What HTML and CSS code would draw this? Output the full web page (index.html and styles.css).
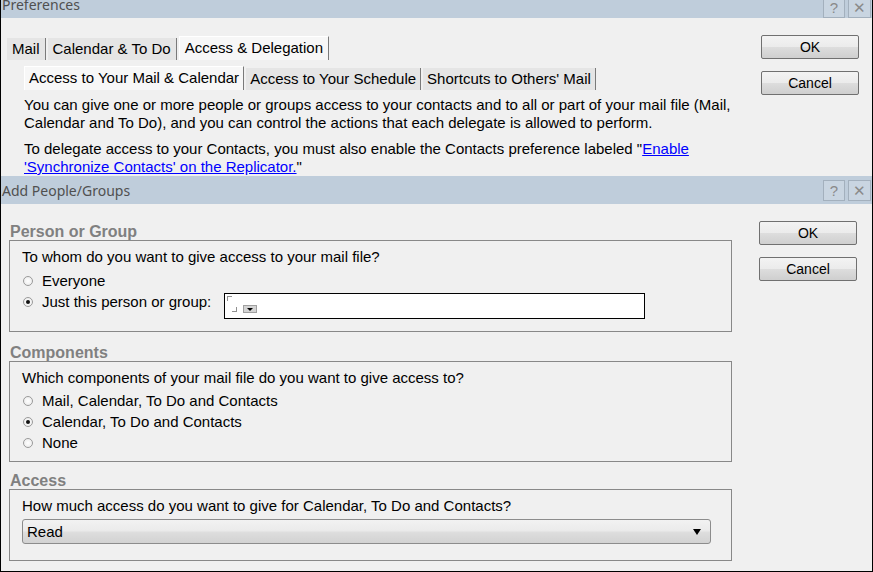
FILE: index.html
```html
<!DOCTYPE html>
<html lang="en">
<head>
    <meta charset="UTF-8">
    <title>Preferences - Add People/Groups</title>
    <link rel="stylesheet" href="styles.css">
</head>
<body>

    <!-- Preferences window (background) -->
    <div class="window prefs">
        <div class="titlebar top">
            <span class="title cut">Preferences</span>
            <div class="title-btns">
                <span class="tbtn">?</span>
                <span class="tbtn">&#x2715;</span>
            </div>
        </div>
        <div class="win-body">
            <div class="prefs-main">
                <div class="tabs">
                    <span class="tab">Mail</span>
                    <span class="tab">Calendar &amp; To Do</span>
                    <span class="tab active">Access &amp; Delegation</span>
                </div>
                <div class="tabs sub">
                    <span class="tab active">Access to Your Mail &amp; Calendar</span>
                    <span class="tab">Access to Your Schedule</span>
                    <span class="tab">Shortcuts to Others' Mail</span>
                </div>
                <p class="info">You can give one or more people or groups access to your contacts and to all or part of your mail file (Mail,<br>Calendar and To Do), and you can control the actions that each delegate is allowed to perform.</p>
                <p class="info">To delegate access to your Contacts, you must also enable the Contacts preference labeled "<a href="#">Enable <br>'Synchronize Contacts' on the Replicator.</a>"</p>
            </div>
            <div class="btn-col first">
                <button class="btn">OK</button>
                <button class="btn">Cancel</button>
            </div>
        </div>
    </div>

    <!-- Add People/Groups dialog -->
    <div class="window dialog">
        <div class="titlebar">
            <span class="title">Add People/Groups</span>
            <div class="title-btns">
                <span class="tbtn">?</span>
                <span class="tbtn">&#x2715;</span>
            </div>
        </div>
        <div class="win-body">
            <div class="dlg-main">
                <div class="group-label">Person or Group</div>
                <div class="group">
                    <div class="question">To whom do you want to give access to your mail file?</div>
                    <div class="radio-row">
                        <span class="radio"></span>
                        <span>Everyone</span>
                    </div>
                    <div class="radio-row person">
                        <span class="radio checked"></span>
                        <span class="person-label">Just this person or group:</span>
                        <div class="name-field">
                            <span class="corner tl"></span>
                            <span class="corner br"></span>
                            <span class="mini-drop"></span>
                        </div>
                    </div>
                </div>

                <div class="group-label">Components</div>
                <div class="group comp">
                    <div class="question">Which components of your mail file do you want to give access to?</div>
                    <div class="radio-row">
                        <span class="radio"></span>
                        <span>Mail, Calendar, To Do and Contacts</span>
                    </div>
                    <div class="radio-row">
                        <span class="radio checked"></span>
                        <span>Calendar, To Do and Contacts</span>
                    </div>
                    <div class="radio-row">
                        <span class="radio"></span>
                        <span>None</span>
                    </div>
                </div>

                <div class="group-label last">Access</div>
                <div class="group access">
                    <div class="question">How much access do you want to give for Calendar, To Do and Contacts?</div>
                    <div class="select">
                        <span>Read</span>
                        <span class="arrow"></span>
                    </div>
                </div>
            </div>
            <div class="btn-col">
                <button class="btn">OK</button>
                <button class="btn">Cancel</button>
            </div>
        </div>
    </div>

</body>
</html>
```

FILE: styles.css
```css
body {
    margin: 0;
    width: 873px;
    height: 572px;
    overflow: hidden;
    background-color: #f0f0f0;
    font-family: 'Liberation Sans', Arial, sans-serif;
    font-size: 15px;
    color: #000;
}

.window {
    box-sizing: border-box;
    border-left: 1px solid #000;
    border-right: 1px solid #000;
    background-color: #f0f0f0;
}

.prefs {
    height: 176px;
}

.dialog {
    height: 396px;
    border-bottom: 1px solid #000;
}

/* title bars */
.titlebar {
    height: 28px;
    background-color: #bfcddb;
    display: flex;
    align-items: center;
    justify-content: space-between;
    padding: 0 1px 0 1px;
}

.titlebar.top {
    height: 18px;
    align-items: flex-start;
    overflow: hidden;
}

.title {
    font-family: 'Noto Sans', 'Open Sans', sans-serif;
    font-size: 14px;
    color: #505050;
}

.title.cut {
    margin-top: -5px;
}

.title-btns {
    display: flex;
    gap: 3px;
}

.top .title-btns {
    margin-top: -3px;
}

.tbtn {
    width: 22px;
    height: 21px;
    box-sizing: border-box;
    border: 1px solid #a3b0bd;
    background-color: #c9d5e1;
    color: #8a8a8a;
    font-size: 15px;
    line-height: 19px;
    text-align: center;
}

.tbtn + .tbtn {
    width: 23px;
}

.win-body {
    display: flex;
}

/* preferences content */
.prefs-main {
    width: 740px;
    padding-top: 19px;
}

.tabs {
    display: flex;
    align-items: flex-end;
    height: 23px;
    padding-left: 6px;
}

.tab {
    height: 22px;
    line-height: 22px;
    padding: 0 5px;
    background-color: #e5e5e5;
    border-right: 1px solid #7a7a7a;
    margin-right: 2px;
    white-space: nowrap;
}

.tab.active {
    height: 23px;
    background-color: #f7f7f7;
    border-top: 1px solid #fff;
    border-left: 1px solid #fff;
}

.tabs.sub {
    margin-top: 7px;
    padding-left: 23px;
}

.tabs.sub .tab {
    padding: 0 4px;
}

.info {
    margin: 8px 0 0 23px;
    line-height: 18px;
}

.info:first-of-type {
    margin-top: 6px;
}

.info a {
    color: #0000ff;
}

.btn-col {
    display: flex;
    flex-direction: column;
    gap: 12px;
    padding-top: 17px;
    margin-left: 27px;
}

.btn-col.first {
    margin-left: 20px;
}

.btn {
    width: 98px;
    height: 24px;
    font-family: 'Liberation Sans', Arial, sans-serif;
    font-size: 14px;
    color: #000;
    border: 1px solid #707070;
    border-radius: 2px;
    background: linear-gradient(#f3f3f3, #ebebeb 50%, #dddddd 51%, #cfcfcf);
    padding: 0;
}

/* add people dialog */
.dlg-main {
    width: 723px;
    margin-left: 8px;
    padding-top: 19px;
}

.group-label {
    font-size: 16px;
    font-weight: bold;
    color: #808080;
    line-height: 17px;
    padding-left: 1px;
    margin-top: 12px;
}

.group-label:first-child {
    margin-top: 0;
}

.group-label.last {
    margin-top: 10px;
}

.group {
    border: 1px solid #888;
    padding: 7px 12px 12px;
}

.group.comp {
    padding-bottom: 9px;
}

.group.access {
    padding-bottom: 16px;
}

.question {
    line-height: 18px;
    margin-bottom: 6px;
}

.comp .question {
    margin-bottom: 5px;
}

.radio-row {
    display: flex;
    align-items: center;
    line-height: 18px;
    margin-bottom: 3px;
}

.radio-row:last-child {
    margin-bottom: 0;
}

.radio-row.person {
    align-items: flex-start;
}

.radio-row.person .radio {
    margin-top: 4px;
}

.radio {
    width: 10px;
    height: 10px;
    box-sizing: border-box;
    border-radius: 50%;
    border: 1px solid #9a9a9a;
    background: radial-gradient(#ffffff, #e8e8e8);
    margin: 0 9px 0 1px;
    position: relative;
}

.radio.checked::after {
    content: '';
    position: absolute;
    left: 2px;
    top: 2px;
    width: 4px;
    height: 4px;
    border-radius: 50%;
    background-color: #111;
}

.person-label {
    width: 182px;
}

.name-field {
    width: 421px;
    height: 26px;
    box-sizing: border-box;
    border: 1px solid #000;
    background-color: #fff;
    position: relative;
}

.corner {
    position: absolute;
    width: 4px;
    height: 4px;
    border-color: #909090;
    border-style: solid;
}

.corner.tl {
    left: 2px;
    top: 2px;
    border-width: 1px 0 0 1px;
}

.corner.br {
    left: 7px;
    top: 13px;
    border-width: 0 1px 1px 0;
}

.mini-drop {
    position: absolute;
    left: 18px;
    top: 11px;
    width: 14px;
    height: 8px;
    box-sizing: border-box;
    background-color: #d4d4d4;
    border: 1px solid #a0a0a0;
}

.mini-drop::after {
    content: '';
    position: absolute;
    left: 3px;
    top: 2px;
    border-left: 3px solid transparent;
    border-right: 3px solid transparent;
    border-top: 3px solid #000;
}

.question + .select {
    margin-top: -2px;
}

.select {
    width: 689px;
    height: 25px;
    box-sizing: border-box;
    border: 1px solid #8c8c8c;
    border-radius: 3px;
    background: linear-gradient(#f2f2f2, #ebebeb 45%, #dddddd 55%, #d2d2d2);
    display: flex;
    align-items: center;
    justify-content: space-between;
    padding: 0 9px 0 4px;
}

.arrow {
    border-left: 4px solid transparent;
    border-right: 4px solid transparent;
    border-top: 6px solid #000;
}
```
